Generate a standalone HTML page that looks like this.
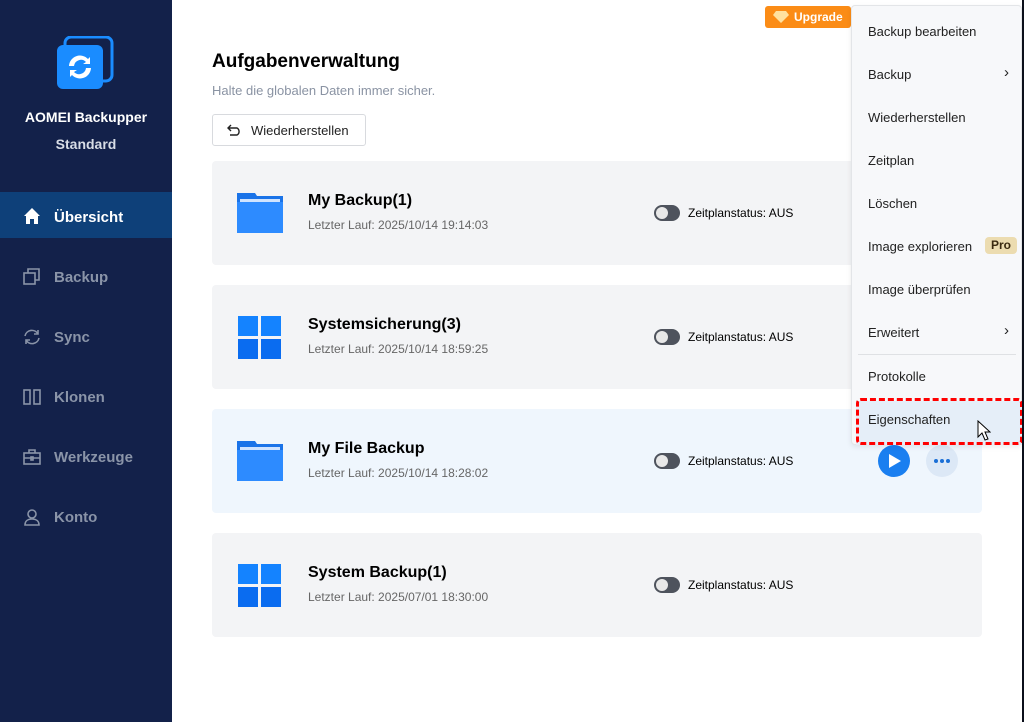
<!DOCTYPE html>
<html><head><meta charset="utf-8"><style>
*{margin:0;padding:0;box-sizing:border-box}
body{width:1024px;height:722px;overflow:hidden;background:#fff;font-family:"Liberation Sans",sans-serif;position:relative}
.sb{position:absolute;left:0;top:0;width:172px;height:722px;background:#13214a}
.abs{position:absolute}
.nav{position:absolute;left:0;width:172px;height:46px;color:#8a94a8;font-size:15px;font-weight:bold}
.nav span{position:absolute;left:54px;top:17px}
.nav svg{position:absolute;left:22px;top:15px}
.card{position:absolute;left:212px;width:770px;height:104px;background:#f3f4f6;border-radius:4px}
.title{position:absolute;left:96px;top:31px;font-size:16px;font-weight:bold;color:#000}
.sub{position:absolute;left:96px;top:57px;font-size:12px;color:#666}
.tog{position:absolute;left:442px;top:44px;width:26px;height:16px;border-radius:8px;background:#4e535d}
.tog::after{content:"";position:absolute;left:2px;top:2px;width:12px;height:12px;border-radius:6px;background:#e8e8e8}
.st{position:absolute;left:476px;top:45px;font-size:12px;color:#000}
.menu{position:absolute;left:851px;top:5px;width:171px;height:440px;background:#f7f8fa;border:1px solid #e3e5e8;border-radius:4px;box-shadow:0 2px 6px rgba(0,0,0,.08)}
.mi{position:absolute;left:16px;font-size:13px;color:#222}
</style></head><body>
<div class="sb"></div>
<svg class="abs" style="left:56px;top:36px" width="58" height="54"><rect x="9" y="1" width="47" height="44" rx="6" fill="none" stroke="#1a8cff" stroke-width="3"/><rect x="1" y="9" width="46" height="44" rx="6" fill="#1a8cff"/><path d="M13 30a11 11 0 0 1 19-7l2-2v7h-7l3-2a7 7 0 0 0-12 4z M35 32a11 11 0 0 1-19 7l-2 2v-7h7l-3 2a7 7 0 0 0 12-4z" fill="#fff"/></svg>
<div class="abs" style="left:0;width:172px;top:109px;text-align:center;color:#fff;font-size:14px;font-weight:bold">AOMEI Backupper</div>
<div class="abs" style="left:0;width:172px;top:136px;text-align:center;color:#d8dde6;font-size:14px;font-weight:bold">Standard</div>
<div class="nav" style="top:192px;background:#0e4079;color:#fff"><svg width="20" height="20" style="top:14px"><path d="M2 10L10 2l8 8h-2v8h-4v-5H8v5H4v-8z" fill="#fff"/></svg><span style="top:17px">Übersicht</span></div>
<div class="nav" style="top:252px"><svg width="20" height="20" fill="none" stroke="#8a94a8" stroke-width="1.6"><rect x="2" y="6" width="11" height="11"/><path d="M6 6V2h11v11h-4"/></svg><span>Backup</span></div>
<div class="nav" style="top:312px"><svg width="20" height="20" fill="none" stroke="#8a94a8" stroke-width="1.6"><path d="M3 9a7 7 0 0 1 13-2M17 11a7 7 0 0 1-13 2M16 3v4h-4M4 17v-4h4"/></svg><span>Sync</span></div>
<div class="nav" style="top:372px"><svg width="20" height="20" fill="none" stroke="#8a94a8" stroke-width="1.6"><rect x="2" y="3" width="6" height="14"/><rect x="12" y="3" width="6" height="14"/></svg><span>Klonen</span></div>
<div class="nav" style="top:432px"><svg width="20" height="20" fill="none" stroke="#8a94a8" stroke-width="1.6"><rect x="2" y="6" width="16" height="11"/><path d="M7 6V3h6v3M2 11h16"/><rect x="9" y="10" width="2" height="3"/></svg><span>Werkzeuge</span></div>
<div class="nav" style="top:492px"><svg width="20" height="20" fill="none" stroke="#8a94a8" stroke-width="1.6"><circle cx="10" cy="7" r="4"/><path d="M3 18c0-4 3-6 7-6s7 2 7 6z"/></svg><span>Konto</span></div>

<div class="abs" style="left:212px;top:51px;font-size:19px;font-weight:bold;color:#000">Aufgabenverwaltung</div>
<div class="abs" style="left:212px;top:83px;font-size:13px;color:#8a93a3">Halte die globalen Daten immer sicher.</div>
<div class="abs" style="left:212px;top:114px;width:154px;height:32px;border:1px solid #d8dade;border-radius:3px;background:#fff"><svg class="abs" style="left:14px;top:9px" width="16" height="12" fill="none" stroke="#222" stroke-width="1.4"><path d="M4 1L1 4l3 3M1 4h9a4 4 0 0 1 0 7H3"/></svg><span class="abs" style="left:38px;top:8px;font-size:13px;color:#222">Wiederherstellen</span></div>

<div class="abs" style="left:765px;top:6px;width:86px;height:22px;background:#fb8c16;border-radius:3px"><svg class="abs" style="left:8px;top:5px" width="16" height="12"><path d="M3 0h10l3 4-8 8-8-8z" fill="#ffe1a0"/></svg><span class="abs" style="left:29px;top:4px;color:#fff;font-size:12px;font-weight:bold">Upgrade</span></div>

<div class="card" style="top:161px"><svg class="abs" style="left:25px;top:32px" width="46" height="40"><path d="M0 0h18l2 3h26v37H0z" fill="#1a73e8"/><rect x="3" y="6" width="40" height="3" fill="#cfe3ff"/><rect x="0" y="9" width="46" height="31" fill="#2d8bff"/></svg><div class="title">My Backup(1)</div><div class="sub">Letzter Lauf: 2025/10/14 19:14:03</div><div class="tog"></div><div class="st">Zeitplanstatus: AUS</div></div>
<div class="card" style="top:285px"><svg class="abs" style="left:26px;top:31px" width="44" height="44" fill="#1483ff"><rect width="20" height="20"/><rect x="23" width="20" height="20"/><rect y="23" width="20" height="20" fill="#0a6cf0"/><rect x="23" y="23" width="20" height="20" fill="#0a6cf0"/></svg><div class="title">Systemsicherung(3)</div><div class="sub">Letzter Lauf: 2025/10/14 18:59:25</div><div class="tog"></div><div class="st">Zeitplanstatus: AUS</div></div>
<div class="card" style="top:409px;background:#eff6fd"><svg class="abs" style="left:25px;top:32px" width="46" height="40"><path d="M0 0h18l2 3h26v37H0z" fill="#1a73e8"/><rect x="3" y="6" width="40" height="3" fill="#cfe3ff"/><rect x="0" y="9" width="46" height="31" fill="#2d8bff"/></svg><div class="title">My File Backup</div><div class="sub">Letzter Lauf: 2025/10/14 18:28:02</div><div class="tog"></div><div class="st">Zeitplanstatus: AUS</div>
<div class="abs" style="left:666px;top:36px;width:32px;height:32px;border-radius:16px;background:#1a7ff0"><svg class="abs" style="left:11px;top:9px" width="12" height="14"><path d="M0 0l12 7-12 7z" fill="#fff"/></svg></div>
<div class="abs" style="left:714px;top:36px;width:32px;height:32px;border-radius:16px;background:#dce8f6"><svg class="abs" style="left:8px;top:14px" width="16" height="4" fill="#1a6fd6"><circle cx="2" cy="2" r="2"/><circle cx="8" cy="2" r="2"/><circle cx="14" cy="2" r="2"/></svg></div></div>
<div class="card" style="top:533px"><svg class="abs" style="left:26px;top:31px" width="44" height="44" fill="#1483ff"><rect width="20" height="20"/><rect x="23" width="20" height="20"/><rect y="23" width="20" height="20" fill="#0a6cf0"/><rect x="23" y="23" width="20" height="20" fill="#0a6cf0"/></svg><div class="title">System Backup(1)</div><div class="sub">Letzter Lauf: 2025/07/01 18:30:00</div><div class="tog"></div><div class="st">Zeitplanstatus: AUS</div></div>

<div class="menu">
<div class="mi" style="top:18px">Backup bearbeiten</div>
<div class="mi" style="top:61px">Backup</div><div class="mi" style="top:58px;left:152px;font-size:15px">›</div>
<div class="mi" style="top:104px">Wiederherstellen</div>
<div class="mi" style="top:147px">Zeitplan</div>
<div class="mi" style="top:190px">Löschen</div>
<div class="mi" style="top:233px">Image explorieren</div><div class="abs" style="left:133px;top:231px;width:32px;height:17px;background:#ecdcb0;border-radius:4px;font-size:12px;font-weight:bold;color:#3a2a10;text-align:center;line-height:17px">Pro</div>
<div class="mi" style="top:276px">Image überprüfen</div>
<div class="mi" style="top:319px">Erweitert</div><div class="mi" style="top:316px;left:152px;font-size:15px">›</div>
<div class="abs" style="left:6px;top:348px;width:158px;height:1px;background:#dfe1e4"></div>
<div class="mi" style="top:363px">Protokolle</div>
<div class="abs" style="left:4px;top:395px;width:167px;height:44px;background:#e5eef8"></div>
<div class="mi" style="top:406px">Eigenschaften</div>
</div>
<div class="abs" style="left:856px;top:398px;width:167px;height:47px;border:3px dashed #f00;border-radius:5px"></div>
<svg class="abs" style="left:977px;top:420px" width="14" height="22"><path d="M1 1v16l4-4 3 7 3-1-3-7h5z" fill="#fff" stroke="#000" stroke-width="1"/></svg>
<div class="abs" style="left:1022px;top:0;width:2px;height:722px;background:#0b0f1a"></div>
</body></html>
